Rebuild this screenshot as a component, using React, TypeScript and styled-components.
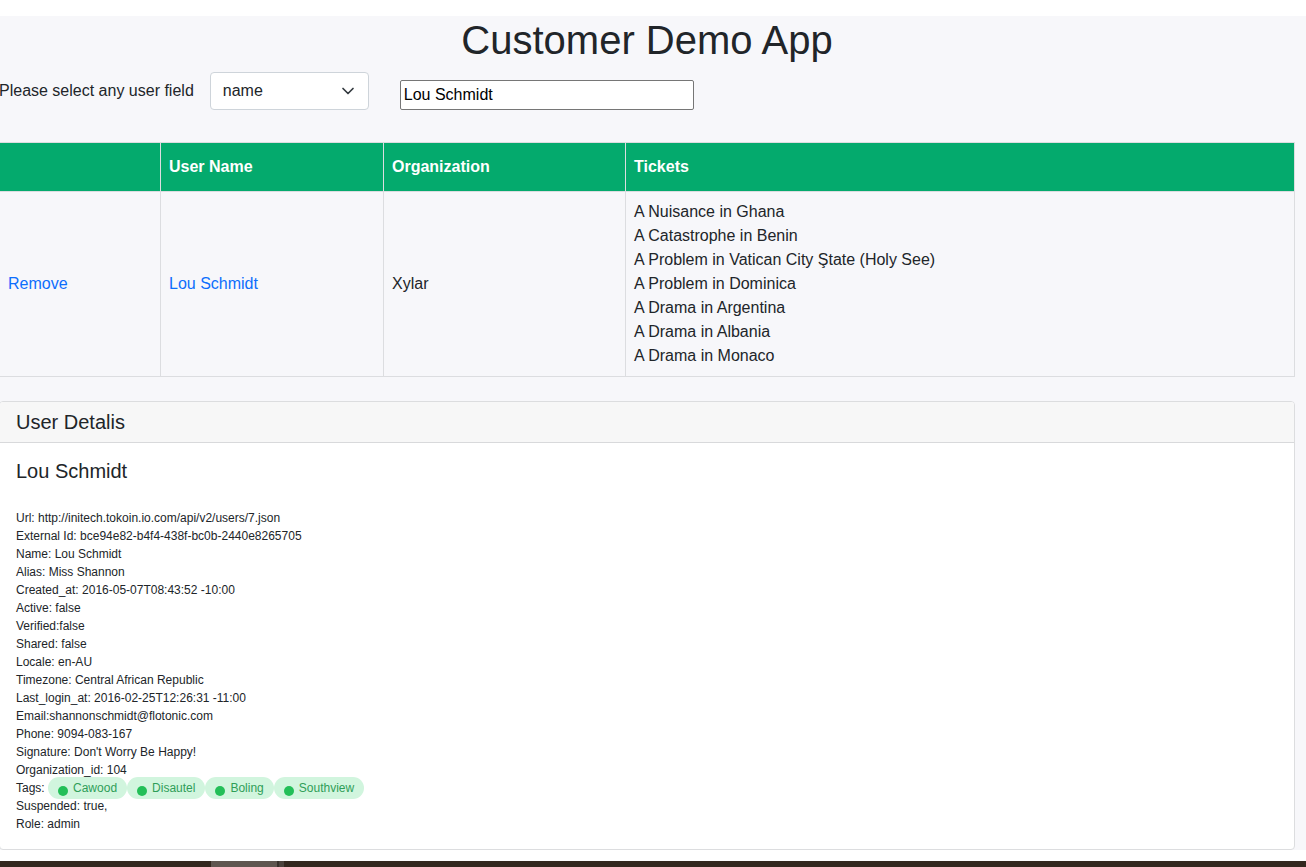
import React, { useState } from "react";
import styled, { createGlobalStyle } from "styled-components";

const GlobalStyle = createGlobalStyle`
  *, *::before, *::after { box-sizing: border-box; }
  body {
    margin: 0;
    background: #fff;
    color: #212529;
    font: 16px/24px "Liberation Sans", Arial, sans-serif;
  }
`;

const Shell = styled.div`
  display: flex;
  flex-direction: column;
  min-height: 100vh;
  padding-top: 16px;
  overflow-x: hidden;
`;

const Page = styled.main`
  margin-left: -1px;
  padding-right: 11px;
  background: #f7f7fa;
`;

const Title = styled.h1`
  margin: 0 0 8px;
  font-size: 40px;
  font-weight: 400;
  line-height: 48px;
  text-align: center;
`;

const SearchBar = styled.form`
  display: flex;
  align-items: flex-end;
  margin-bottom: 32px;
`;

const FieldLabel = styled.label`
  margin-right: 16px;
  padding: 7px 0;
  white-space: nowrap;
`;

const SelectBox = styled.div`
  position: relative;
  width: 159px;
  margin-right: 31px;
`;

const Select = styled.select`
  display: block;
  appearance: none;
  width: 100%;
  height: 38px;
  padding: 6px 36px 6px 12px;
  border: 1px solid #ced4da;
  border-radius: 4px;
  background: #fff;
  color: #212529;
  font: inherit;
`;

const Chevron = styled.svg`
  position: absolute;
  top: 13px;
  right: 13px;
  width: 16px;
  height: 12px;
  pointer-events: none;
`;

const SearchInput = styled.input`
  width: 294px;
  height: 30px;
  padding: 1px 3px;
  border: 1px solid #767676;
  border-radius: 2px;
  background: #fff;
  color: #000;
  font: inherit;
`;

const Table = styled.table`
  width: 100%;
  margin-bottom: 24px;
  border-collapse: collapse;
  table-layout: fixed;
`;

const HeadCell = styled.th<{ $width?: number }>`
  width: ${(p) => (p.$width ? `${p.$width}px` : "auto")};
  height: 49px;
  padding: 12px 8px;
  border: 1px solid #dcdde0;
  background: #04aa6d;
  color: #fff;
  text-align: left;
`;

const Cell = styled.td`
  padding: 8px;
  border: 1px solid #dcdde0;
  vertical-align: middle;
`;

const TicketList = styled.ul`
  margin: 0;
  padding: 0;
  list-style: none;
`;

const Link = styled.a`
  color: #0d6efd;
  text-decoration: none;
`;

const Card = styled.section`
  border: 1px solid #dcdddf;
  border-radius: 4px;
  background: #fff;
  overflow: hidden;
`;

const CardHeader = styled.h2`
  margin: 0;
  padding: 8px 16px;
  border-bottom: 1px solid #d8d9db;
  background: #f7f7f7;
  font-size: 20px;
  font-weight: 400;
  line-height: 24px;
`;

const CardBody = styled.div`
  padding: 16px;
`;

const CardTitle = styled.h3`
  margin: 0 0 26px;
  font-size: 20px;
  font-weight: 400;
  line-height: 24px;
`;

const Details = styled.div`
  font-size: 12px;
  line-height: 18px;
`;

const Tag = styled.span`
  padding: 4px 10px;
  border-radius: 11px;
  background: #d1f5de;
  color: #2f9e58;
`;

const Dot = styled.span`
  display: inline-block;
  width: 10px;
  height: 10px;
  margin-right: 5px;
  border-radius: 50%;
  background: #23bf58;
  vertical-align: -4px;
`;

const Taskbar = styled.footer`
  display: flex;
  flex: 1;
  min-height: 6px;
  margin-top: 11px;
  padding-left: 211px;
  background: #33281f;
`;

const TaskItem = styled.span<{ $width: number; $color: string }>`
  width: ${(p) => p.$width}px;
  background: ${(p) => p.$color};
`;

const tickets = [
  "A Nuisance in Ghana",
  "A Catastrophe in Benin",
  "A Problem in Vatican City Ştate (Holy See)",
  "A Problem in Dominica",
  "A Drama in Argentina",
  "A Drama in Albania",
  "A Drama in Monaco",
];

const details = [
  "Url: http://initech.tokoin.io.com/api/v2/users/7.json",
  "External Id: bce94e82-b4f4-438f-bc0b-2440e8265705",
  "Name: Lou Schmidt",
  "Alias: Miss Shannon",
  "Created_at: 2016-05-07T08:43:52 -10:00",
  "Active: false",
  "Verified:false",
  "Shared: false",
  "Locale: en-AU",
  "Timezone: Central African Republic",
  "Last_login_at: 2016-02-25T12:26:31 -11:00",
  "Email:shannonschmidt@flotonic.com",
  "Phone: 9094-083-167",
  "Signature: Don't Worry Be Happy!",
  "Organization_id: 104",
];

const tags = ["Cawood", "Disautel", "Boling", "Southview"];

export default function App() {
  const [field, setField] = useState("name");
  const [query, setQuery] = useState("Lou Schmidt");

  return (
    <Shell>
      <GlobalStyle />
      <Page>
        <Title>Customer Demo App</Title>
        <SearchBar onSubmit={(e) => e.preventDefault()}>
          <FieldLabel htmlFor="field">Please select any user field</FieldLabel>
          <SelectBox>
            <Select id="field" value={field} onChange={(e) => setField(e.target.value)}>
              <option value="name">name</option>
              <option value="alias">alias</option>
              <option value="email">email</option>
            </Select>
            <Chevron viewBox="0 0 16 12" fill="none" aria-hidden="true">
              <path
                d="M3 3.5l5 5 5-5"
                stroke="#343a40"
                strokeWidth="1.7"
                strokeLinecap="round"
                strokeLinejoin="round"
              />
            </Chevron>
          </SelectBox>
          <SearchInput
            type="text"
            aria-label="Search value"
            value={query}
            onChange={(e) => setQuery(e.target.value)}
          />
        </SearchBar>
        <Table>
          <thead>
            <tr>
              <HeadCell $width={161} />
              <HeadCell $width={223}>User Name</HeadCell>
              <HeadCell $width={242}>Organization</HeadCell>
              <HeadCell>Tickets</HeadCell>
            </tr>
          </thead>
          <tbody>
            <tr>
              <Cell>
                <Link href="#remove">Remove</Link>
              </Cell>
              <Cell>
                <Link href="#user">Lou Schmidt</Link>
              </Cell>
              <Cell>Xylar</Cell>
              <Cell>
                <TicketList>
                  {tickets.map((t) => (
                    <li key={t}>{t}</li>
                  ))}
                </TicketList>
              </Cell>
            </tr>
          </tbody>
        </Table>
        <Card>
          <CardHeader>User Detalis</CardHeader>
          <CardBody>
            <CardTitle>Lou Schmidt</CardTitle>
            <Details>
              {details.map((d) => (
                <div key={d}>{d}</div>
              ))}
              <div>
                Tags:{" "}
                {tags.map((t) => (
                  <Tag key={t}>
                    <Dot />
                    {t}
                  </Tag>
                ))}
              </div>
              <div>Suspended: true,</div>
              <div>Role: admin</div>
            </Details>
          </CardBody>
        </Card>
      </Page>
      <Taskbar>
        <TaskItem $width={66} $color="#5f5650" />
        <TaskItem $width={2} $color="#37302b" />
        <TaskItem $width={5} $color="#4b433d" />
      </Taskbar>
    </Shell>
  );
}
